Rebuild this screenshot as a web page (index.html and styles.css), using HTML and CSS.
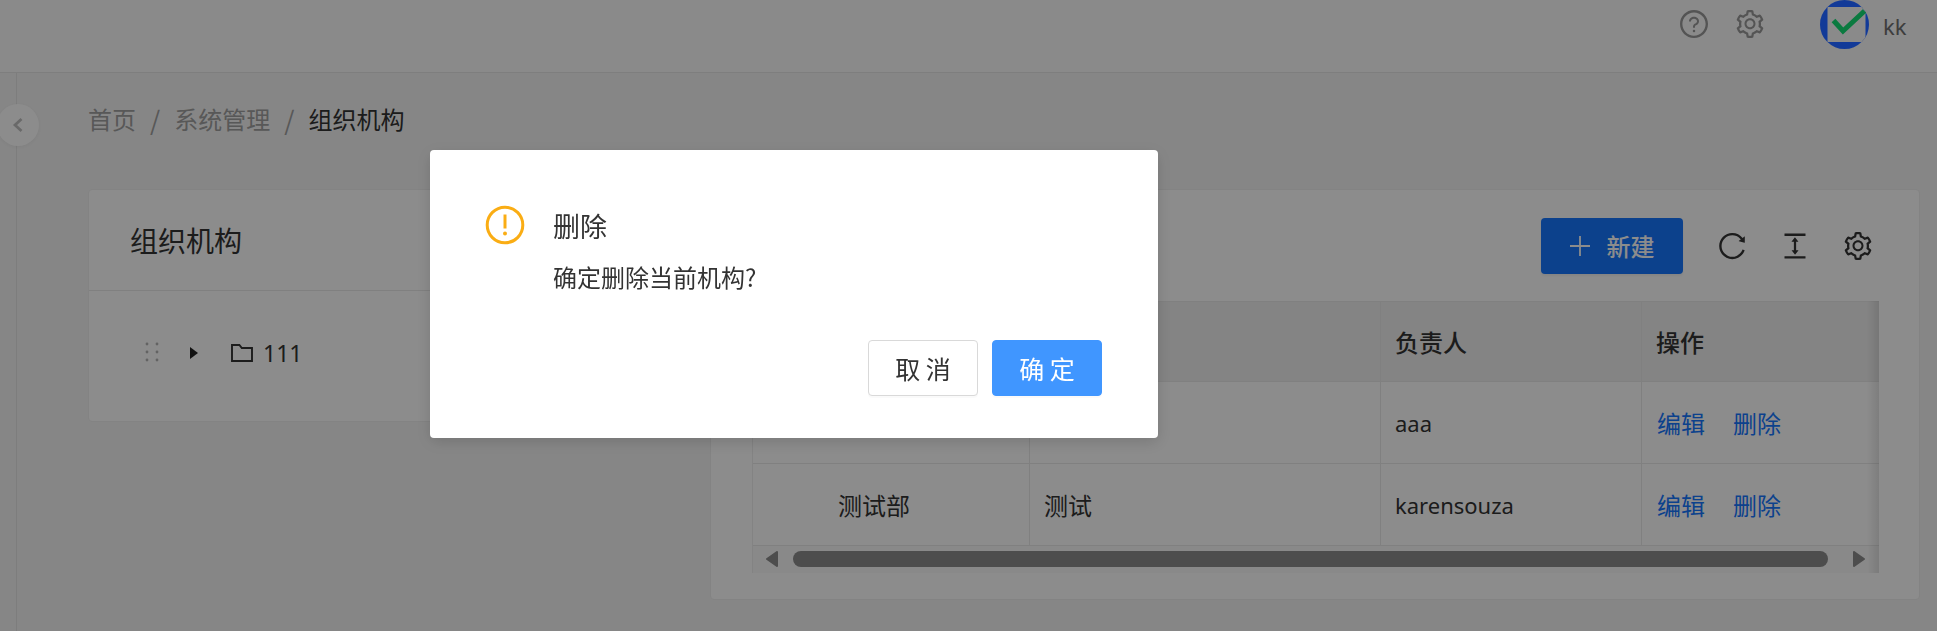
FILE: index.html
```html
<!DOCTYPE html>
<html>
<head>
  <title>组织机构</title>
  <link rel="stylesheet" href="styles.css">
</head>
<body>

  <header class="topbar">
    <svg class="top-icon" viewBox="64 64 896 896" fill="currentColor"><path d="M512 64C264.6 64 64 264.6 64 512s200.6 448 448 448 448-200.6 448-448S759.4 64 512 64zm0 820c-205.4 0-372-166.6-372-372s166.6-372 372-372 372 166.6 372 372-166.6 372-372 372z"/><path d="M623.6 316.7C593.6 290.4 554 276 512 276s-81.6 14.5-111.6 40.7C369.2 344 352 380.7 352 420v7.6c0 4.4 3.6 8 8 8h48c4.4 0 8-3.6 8-8V420c0-44.1 43.1-80 96-80s96 35.9 96 80c0 31.1-22 59.6-56.1 72.7-21.2 8.1-39.2 22.3-52.1 40.9-13.1 19-19.9 41.8-19.9 64.9V620c0 4.4 3.6 8 8 8h48c4.4 0 8-3.6 8-8v-22.7a48.3 48.3 0 0 1 30.9-44.8c59-22.7 97.1-74.7 97.1-132.5.1-39.3-17.1-76-48.3-103.3zM472 732a40 40 0 1 0 80 0 40 40 0 1 0-80 0z"/></svg>
    <svg class="top-icon" viewBox="64 64 896 896" fill="currentColor"><use href="#gear"/></svg>
    <div class="avatar">
      <svg viewBox="0 0 49 49">
        <clipPath id="round"><circle cx="24.5" cy="24.5" r="24.5"/></clipPath>
        <circle cx="24.5" cy="24.5" r="24.5" fill="#123a98"/>
        <rect x="7.5" y="7" width="38" height="35" fill="#8a8a8a" clip-path="url(#round)"/>
        <path d="M13.5 20.5L23 31 44.5 11" fill="none" stroke="#0b7a40" stroke-width="5"/>
      </svg>
    </div>
    <span class="user-name">kk</span>
  </header>

  <div class="page">
    <aside class="side">
      <button class="collapse"><svg viewBox="0 0 12 16"><path d="M9.5 2L3 8l6.5 6" fill="none" stroke="currentColor" stroke-width="2.8"/></svg></button>
    </aside>

    <main class="content">
      <nav class="crumbs">
        <span>首页</span><i>/</i><span>系统管理</span><i>/</i><b>组织机构</b>
      </nav>

      <div class="panels">
        <section class="card tree-card">
          <h2 class="card-title">组织机构</h2>
          <div class="tree-row">
            <svg class="drag" viewBox="0 0 14 20"><g fill="#b5b5b5"><circle cx="2" cy="2" r="1.4"/><circle cx="12" cy="2" r="1.4"/><circle cx="2" cy="10" r="1.4"/><circle cx="12" cy="10" r="1.4"/><circle cx="2" cy="18" r="1.4"/><circle cx="12" cy="18" r="1.4"/></g></svg>
            <span class="caret"></span>
            <svg class="folder" viewBox="0 0 22 18"><path d="M1 1h7.4l2.4 3H21v13H1z" fill="none" stroke="currentColor" stroke-width="1.9"/></svg>
            <span>111</span>
          </div>
        </section>

        <section class="card list-card">
          <div class="toolbar">
            <button class="btn-new"><svg viewBox="0 0 20 20"><path d="M10 0v20M0 10h20" stroke="currentColor" stroke-width="1.8"/></svg>新建</button>
            <svg class="tool-icon" viewBox="64 64 896 896" fill="currentColor"><path d="M909.1 209.3l-56.4 44.1C775.8 155.1 656.2 92 521.9 92 290 92 102.3 279.5 102 511.5 101.7 743.7 289.8 932 521.9 932c181.3 0 335.8-115 394.6-276.1 1.5-4.2-.7-8.9-4.9-10.3l-56.7-19.5a8 8 0 0 0-10.1 4.8c-1.8 5-3.8 10-5.9 14.9-17.3 41-42.1 77.8-73.7 109.4A344.77 344.77 0 0 1 655.9 829c-42.3 17.9-87.4 27-133.8 27-46.5 0-91.5-9.1-133.8-27A341.5 341.5 0 0 1 279 755.2a342.16 342.16 0 0 1-73.7-109.4c-17.9-42.4-27-87.4-27-133.9s9.1-91.5 27-133.9c17.3-41 42.1-77.8 73.7-109.4 31.6-31.6 68.4-56.4 109.3-73.8 42.3-17.9 87.4-27 133.8-27 46.5 0 91.5 9.1 133.8 27a341.5 341.5 0 0 1 109.3 73.8c9.9 9.9 19.2 20.4 27.8 31.4l-60.2 47a8 8 0 0 0 3 14.1l175.6 43c5 1.2 9.9-2.6 9.9-7.7l.8-180.9c-.1-6.6-7.8-10.3-13-6.2z"/></svg>
            <svg class="tool-icon" viewBox="64 64 896 896" fill="currentColor"><path d="M840 836H184c-4.4 0-8 3.6-8 8v60c0 4.4 3.6 8 8 8h656c4.4 0 8-3.6 8-8v-60c0-4.4-3.6-8-8-8zm0-724H184c-4.4 0-8 3.6-8 8v60c0 4.4 3.6 8 8 8h656c4.4 0 8-3.6 8-8v-60c0-4.4-3.6-8-8-8zM610.8 378c6 0 9.4-7 5.7-11.7L515.7 238.7a7.14 7.14 0 0 0-11.3 0L403.6 366.3a7.23 7.23 0 0 0 5.7 11.7H476v268h-62.8c-6 0-9.4 7-5.7 11.7l100.8 127.5c2.9 3.7 8.5 3.7 11.3 0l100.8-127.5c3.7-4.7.4-11.7-5.7-11.7H548V378h62.8z"/></svg>
            <svg class="tool-icon" viewBox="64 64 896 896" fill="currentColor"><use href="#gear"/></svg>
          </div>

          <div class="table">
            <div class="row head">
              <div class="cell"></div><div class="cell"></div><div class="cell">负责人</div><div class="cell">操作</div>
            </div>
            <div class="row">
              <div class="cell"></div><div class="cell"></div><div class="cell latin">aaa</div>
              <div class="cell actions"><a>编辑</a><a>删除</a></div>
            </div>
            <div class="row">
              <div class="cell indent">测试部</div><div class="cell">测试</div><div class="cell latin">karensouza</div>
              <div class="cell actions"><a>编辑</a><a>删除</a></div>
            </div>
            <div class="scrollbar">
              <svg class="arrow left" viewBox="0 0 12 16"><path d="M11 1v14L1 8z" fill="currentColor" stroke="currentColor" stroke-width="2" stroke-linejoin="round"/></svg>
              <span class="thumb"></span>
              <svg class="arrow right" viewBox="0 0 12 16"><path d="M1 1v14l10-7z" fill="currentColor" stroke="currentColor" stroke-width="2" stroke-linejoin="round"/></svg>
            </div>
            <div class="fixed-shadow"></div>
          </div>
        </section>
      </div>
    </main>
  </div>

  <div class="mask"></div>

  <div class="dialog">
    <div class="dialog-body">
      <svg class="warn" viewBox="0 0 40 40"><circle cx="20" cy="20" r="17.8" fill="none" stroke="#faad14" stroke-width="3"/><path d="M20 9.5v14" stroke="#faad14" stroke-width="3"/><circle cx="20" cy="28.5" r="2" fill="#faad14"/></svg>
      <div>
        <div class="dialog-title">删除</div>
        <div class="dialog-text">确定删除当前机构?</div>
      </div>
    </div>
    <div class="dialog-foot">
      <button class="btn">取 消</button>
      <button class="btn primary">确 定</button>
    </div>
  </div>

  <svg class="defs" width="0" height="0">
    <defs>
      <path id="gear" d="M924.8 625.7l-65.5-56c3.1-19 4.7-38.4 4.7-57.8s-1.6-38.8-4.7-57.8l65.5-56a32.03 32.03 0 0 0 9.3-35.2l-.9-2.6a443.74 443.74 0 0 0-79.7-137.9l-1.8-2.1a32.12 32.12 0 0 0-35.1-9.5l-81.3 28.9c-30-24.6-63.5-44-99.7-57.6l-15.7-85a32.05 32.05 0 0 0-25.8-25.7l-2.7-.5c-52.1-9.4-106.9-9.4-159 0l-2.7.5a32.05 32.05 0 0 0-25.8 25.7l-15.8 85.4a351.86 351.86 0 0 0-99 57.4l-81.9-29.1a32 32 0 0 0-35.1 9.5l-1.8 2.1a446.02 446.02 0 0 0-79.7 137.9l-.9 2.6c-4.5 12.5-.8 26.5 9.3 35.2l66.3 56.6c-3.1 18.8-4.6 38-4.6 57.1 0 19.2 1.5 38.4 4.6 57.1L99 625.5a32.03 32.03 0 0 0-9.3 35.2l.9 2.6c18.1 50.4 44.9 96.9 79.7 137.9l1.8 2.1a32.12 32.12 0 0 0 35.1 9.5l81.9-29.1c29.8 24.5 63.1 43.9 99 57.4l15.8 85.4a32.05 32.05 0 0 0 25.8 25.7l2.7.5a449.4 449.4 0 0 0 159 0l2.7-.5a32.05 32.05 0 0 0 25.8-25.7l15.7-85a350 350 0 0 0 99.7-57.6l81.3 28.9a32 32 0 0 0 35.1-9.5l1.8-2.1c34.8-41.1 61.6-87.5 79.7-137.9l.9-2.6c4.5-12.3.8-26.3-9.3-35zM788.3 465.9c2.5 15.1 3.8 30.6 3.8 46.1s-1.3 31-3.8 46.1l-6.6 40.1 74.7 63.9a370.03 370.03 0 0 1-42.6 73.6L721 702.8l-31.4 25.8c-23.9 19.6-50.5 35-79.3 45.8l-38.1 14.3-17.9 97a377.5 377.5 0 0 1-85 0l-17.9-97.2-37.8-14.5c-28.5-10.8-55-26.2-78.7-45.7l-31.4-25.9-93.4 33.2c-17-22.9-31.2-47.6-42.6-73.6l75.5-64.5-6.5-40c-2.4-14.9-3.7-30.3-3.7-45.5 0-15.3 1.2-30.6 3.7-45.5l6.5-40-75.5-64.5c11.3-26.1 25.6-50.7 42.6-73.6l93.4 33.2 31.4-25.9c23.7-19.5 50.2-34.9 78.7-45.7l37.9-14.3 17.9-97.2c28.1-3.2 56.8-3.2 85 0l17.9 97 38.1 14.3c28.7 10.8 55.4 26.2 79.3 45.8l31.4 25.8 92.8-32.9c17 22.9 31.2 47.6 42.6 73.6L781.8 426l6.5 39.9zM512 326c-97.2 0-176 78.8-176 176s78.8 176 176 176 176-78.8 176-176-78.8-176-176-176zm79.2 255.2A111.6 111.6 0 0 1 512 614c-29.9 0-58-11.7-79.2-32.8A111.6 111.6 0 0 1 400 502c0-29.9 11.7-58 32.8-79.2C454 401.6 482.1 390 512 390c29.9 0 58 11.6 79.2 32.8A111.6 111.6 0 0 1 624 502c0 29.9-11.7 58-32.8 79.2z"/>
    </defs>
  </svg>

</body>
</html>
```

FILE: styles.css
```css
* {
  box-sizing: border-box;
}

html, body {
  height: 100%;
}

body {
  margin: 0;
  overflow: hidden;
  background-color: #f5f5f5;
  color: #333;
  font-family: "Noto Sans", "Noto Sans CJK SC", sans-serif;
  font-size: 22px;
}

.defs {
  position: absolute;
}

.topbar {
  height: 73px;
  padding-bottom: 24px;
  display: flex;
  align-items: center;
  justify-content: flex-end;
  background-color: #fbfbfb;
  border-bottom: 1px solid #e6e6e6;
  color: #999;
}

.top-icon {
  width: 28px;
  height: 28px;
  margin-right: 28px;
}

/* the logo keeps its full colour in the dimmed page */
.avatar {
  position: relative;
  z-index: 2;
  width: 49px;
  height: 49px;
  margin-left: 28px;
  margin-right: 14px;
}

.avatar svg {
  display: block;
}

.user-name {
  width: 54px;
  padding-top: 4px;
  color: #707070;
}

.page {
  display: flex;
  height: 558px;
}

.side {
  width: 17px;
  border-right: 1px solid #e4e4e4;
  position: relative;
}

.collapse {
  position: absolute;
  left: -3px;
  top: 31px;
  width: 42px;
  height: 42px;
  padding: 0;
  border: none;
  border-radius: 50%;
  background-color: #fff;
  box-shadow: 0 1px 4px rgba(0, 0, 0, 0.06);
  color: #c0c0c0;
}

.collapse svg {
  display: block;
  width: 12px;
  height: 16px;
  margin: 0 auto;
}

.content {
  flex: 1;
  padding: 27px 17px 0 71px;
}

.crumbs {
  display: flex;
  align-items: center;
  gap: 14px;
  height: 36px;
  font-size: 24px;
  font-family: "Noto Sans CJK SC", sans-serif;
  color: #a0a0a0;
}

.crumbs i {
  font-style: normal;
  font-size: 26px;
}

.crumbs b {
  font-weight: 400;
  color: #333;
}

.panels {
  margin-top: 53px;
  display: flex;
  align-items: flex-start;
  gap: 50px;
}

.card {
  background-color: #fff;
  border: 1px solid #eee;
  border-radius: 4px;
}

.tree-card {
  width: 572px;
  height: 233px;
}

.card-title {
  height: 101px;
  margin: 0;
  padding: 0 41px;
  display: flex;
  align-items: center;
  font-size: 28px;
  font-weight: 400;
  font-family: "Noto Sans CJK SC", sans-serif;
  border-bottom: 1px solid #e9e9e9;
}

.tree-row {
  display: flex;
  align-items: center;
  height: 124px;
  padding-left: 56px;
  font-size: 23px;
}

.drag {
  width: 14px;
  height: 20px;
  margin-right: 31px;
  margin-bottom: 2px;
}

.caret {
  width: 0;
  height: 0;
  border-left: 8px solid #222;
  border-top: 6.5px solid transparent;
  border-bottom: 6.5px solid transparent;
  margin-right: 33px;
}

.folder {
  width: 22px;
  height: 18px;
  margin-right: 10px;
}

.list-card {
  width: 1210px;
  height: 411px;
  padding-left: 41px;
  padding-right: 40px;
}

.toolbar {
  height: 111px;
  display: flex;
  align-items: center;
  justify-content: flex-end;
  gap: 35px;
  padding-right: 7px;
}

.btn-new {
  width: 142px;
  height: 56px;
  display: flex;
  align-items: center;
  justify-content: center;
  gap: 17px;
  border: none;
  border-radius: 4px;
  background-color: #1677ff;
  box-shadow: 0 2px 2px rgba(0, 0, 0, 0.05);
  color: #fff;
  font-size: 24px;
  font-weight: 500;
  font-family: "Noto Sans CJK SC", sans-serif;
}

.btn-new svg {
  width: 20px;
  height: 20px;
}

.tool-icon {
  width: 28px;
  height: 28px;
  color: #333;
}

.table {
  position: relative;
  width: 1127px;
  border-left: 1px solid #eee;
}

.row {
  display: grid;
  grid-template-columns: 277px 351px 261px 1fr;
  height: 82px;
  border-bottom: 1px solid #eaeaea;
}

.row.head {
  height: 81px;
  background-color: #f0f0f0;
  border-top: 1px solid #eaeaea;
  font-weight: 500;
}

.cell {
  display: flex;
  align-items: center;
  padding-left: 14px;
  border-right: 1px solid #eaeaea;
  font-family: "Noto Sans CJK SC", sans-serif;
  font-size: 24px;
}

.cell:last-child {
  border-right: none;
}

.latin {
  font-family: "Noto Sans", sans-serif;
  font-size: 22px;
}

.indent {
  padding-left: 85px;
}

.actions {
  gap: 28px;
  padding-left: 15px;
  color: #1677ff;
}

.scrollbar {
  height: 27px;
  position: relative;
  background-color: #fafafa;
}

.thumb {
  position: absolute;
  left: 40px;
  top: 5px;
  width: 1035px;
  height: 16px;
  border-radius: 8px;
  background-color: #8c8c8c;
}

.arrow {
  position: absolute;
  top: 5px;
  width: 12px;
  height: 16px;
  color: #8c8c8c;
}

.arrow.left {
  left: 13px;
}

.arrow.right {
  left: 1100px;
}

.fixed-shadow {
  position: absolute;
  top: 0;
  right: 0;
  bottom: 0;
  width: 12px;
  background: linear-gradient(to right, rgba(0, 0, 0, 0), rgba(0, 0, 0, 0.1));
}

.mask {
  position: fixed;
  z-index: 1;
  top: 0;
  left: 0;
  right: 0;
  bottom: 0;
  background-color: rgba(0, 0, 0, 0.45);
}

.dialog {
  position: fixed;
  z-index: 3;
  left: 430px;
  top: 150px;
  width: 728px;
  height: 288px;
  padding: 55px 56px 0 55px;
  background-color: #fff;
  border-radius: 4px;
  box-shadow: 0 4px 16px rgba(0, 0, 0, 0.15);
  font-family: "Noto Sans CJK SC", sans-serif;
}

.dialog-body {
  display: flex;
  align-items: flex-start;
  gap: 28px;
}

.warn {
  width: 40px;
  height: 40px;
}

.dialog-title {
  margin-top: 1px;
  font-size: 27px;
  line-height: 40px;
  color: #333;
}

.dialog-text {
  margin-top: 13px;
  font-size: 24px;
  line-height: 36px;
  color: #333;
}

.dialog-foot {
  display: flex;
  justify-content: flex-end;
  gap: 14px;
  margin-top: 45px;
}

.btn {
  width: 110px;
  height: 56px;
  padding: 0;
  border: 1px solid #d9d9d9;
  border-radius: 4px;
  background-color: #fff;
  box-shadow: 0 2px 0 rgba(0, 0, 0, 0.02);
  color: #333;
  font-size: 25px;
  font-family: "Noto Sans CJK SC", sans-serif;
}

.btn.primary {
  background-color: #4096ff;
  border-color: #4096ff;
  color: #fff;
}
```
